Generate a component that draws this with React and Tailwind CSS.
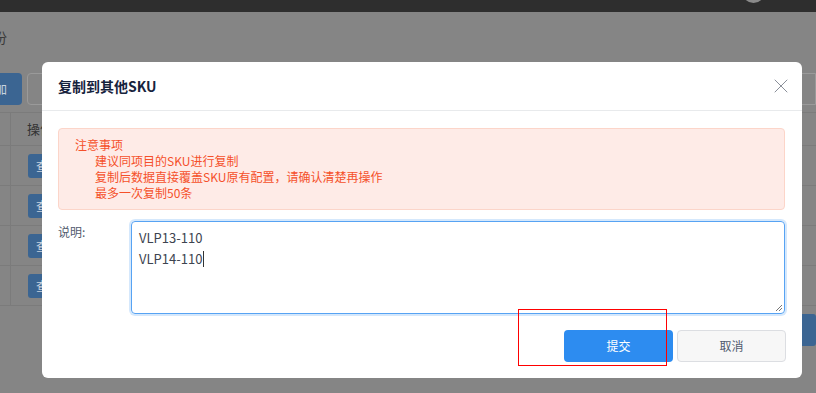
import { X } from 'lucide-react';

const rows = [1, 2, 3, 4];

const notes = [
  '建议同项目的SKU进行复制',
  '复制后数据直接覆盖SKU原有配置，请确认清楚再操作',
  '最多一次复制50条',
];

const PageBehind = () => (
  <div className="flex h-full flex-col">
    <div className="flex h-3 justify-end bg-[#2e2e2e] pr-[51px]">
      <div className="mt-[-20px] h-[23px] w-[23px] rounded-full bg-[#8a8a8a]" />
    </div>
    <div className="flex h-[61px] items-center pb-[10px]">
      <span className="ml-[-7px] text-[14px] text-[#3a3a3a]">份</span>
    </div>
    <div className="flex h-[32px] items-stretch gap-[5px]">
      <div className="flex w-[22px] items-center overflow-hidden rounded-r-[4px] bg-[#3b6592] text-[12px] text-[#c8d3df]">
        <span className="ml-[-5px]">加</span>
      </div>
      <div className="w-[60px] rounded-[4px] border border-[#9a9a9a]" />
      <div className="ml-auto w-[30px] rounded-l-[4px] border border-[#9a9a9a]" />
    </div>
    <div className="mt-[7px] border-t border-[#7b7b7b]">
      <div className="grid h-[33px] grid-cols-[11px_1fr] border-b border-[#7b7b7b]">
        <div className="border-r border-[#7b7b7b]" />
        <div className="flex items-center pl-[16px] text-[13px] text-[#333]">操作</div>
      </div>
      {rows.map((r) => (
        <div key={r} className="grid h-[40px] grid-cols-[11px_1fr] border-b border-[#7b7b7b]">
          <div className="border-r border-[#7b7b7b]" />
          <div className="flex items-center pl-[17px]">
            <span className="flex h-[24px] w-[40px] items-center rounded-[3px] bg-[#3b6592] pl-[8px] text-[12px] text-[#c8d3df]">
              查看
            </span>
          </div>
        </div>
      ))}
    </div>
    <div className="mt-[8px] flex justify-end">
      <span className="flex h-[32px] w-[30px] items-center rounded-[3px] bg-[#3b6592] pl-[9px] text-[12px] text-[#c8d3df]">
        1
      </span>
    </div>
  </div>
);

const CopyDialog = () => (
  <div className="absolute left-[42px] top-[62px] w-[760px] rounded-[6px] bg-white">
    <div className="flex h-[49px] items-center justify-between border-b border-[#e8eaec] pl-4 pr-[9px]">
      <h2 className="text-[14px] font-bold text-[#17233d]">复制到其他SKU</h2>
      <X size={24} strokeWidth={1} className="text-[#8a8f99]" />
    </div>
    <div className="px-4 pt-[17px]">
      <div className="w-[727px] rounded-[4px] border border-[#fcd5c9] bg-[#feebe7] py-[8px] pl-[16px] text-[12px] leading-[16px] text-[#f5502a]">
        <p>注意事项</p>
        {notes.map((n) => (
          <p key={n} className="pl-[20px]">
            {n}
          </p>
        ))}
      </div>
      <div className="mt-[11px] flex">
        <label className="w-[73px] pt-[2px] text-[12px] leading-[18px] text-[#515a6e]">说明:</label>
        <div className="relative h-[93px] w-[654px] rounded-[4px] border border-[#57a3f3] px-[7px] py-[5px] text-[13px] leading-[21px] text-[#3d4450] shadow-[0_0_0_2px_rgba(45,140,240,0.2)]">
          <p>VLP13-110</p>
          <p>
            VLP14-110
            <span className="ml-[1px] inline-block h-[16px] w-px translate-y-[3px] bg-[#333]" />
          </p>
          <svg className="absolute bottom-[1px] right-[1px]" width="9" height="9" viewBox="0 0 9 9">
            <path d="M8 2 L2 8 M8 5 L5 8" stroke="#777" strokeWidth="1" />
          </svg>
        </div>
      </div>
    </div>
    <div className="flex justify-end gap-[4px] px-4 pb-4 pt-4">
      <button className="h-[32px] w-[109px] rounded-[4px] bg-[#2d8cf0] text-[12px] text-white">提交</button>
      <button className="h-[32px] w-[109px] rounded-[4px] border border-[#dcdee2] bg-[#f7f7f7] text-[12px] text-[#515a6e]">
        取消
      </button>
    </div>
  </div>
);

export default function App() {
  return (
    <div
      className="relative h-[393px] w-[816px] overflow-hidden bg-[#858585]"
      style={{ fontFamily: '"Noto Sans CJK SC", "Noto Sans", sans-serif' }}
    >
      <PageBehind />
      <CopyDialog />
      <div className="absolute left-[518px] top-[309px] h-[57px] w-[149px] border border-[#ff0000]" />
    </div>
  );
}
